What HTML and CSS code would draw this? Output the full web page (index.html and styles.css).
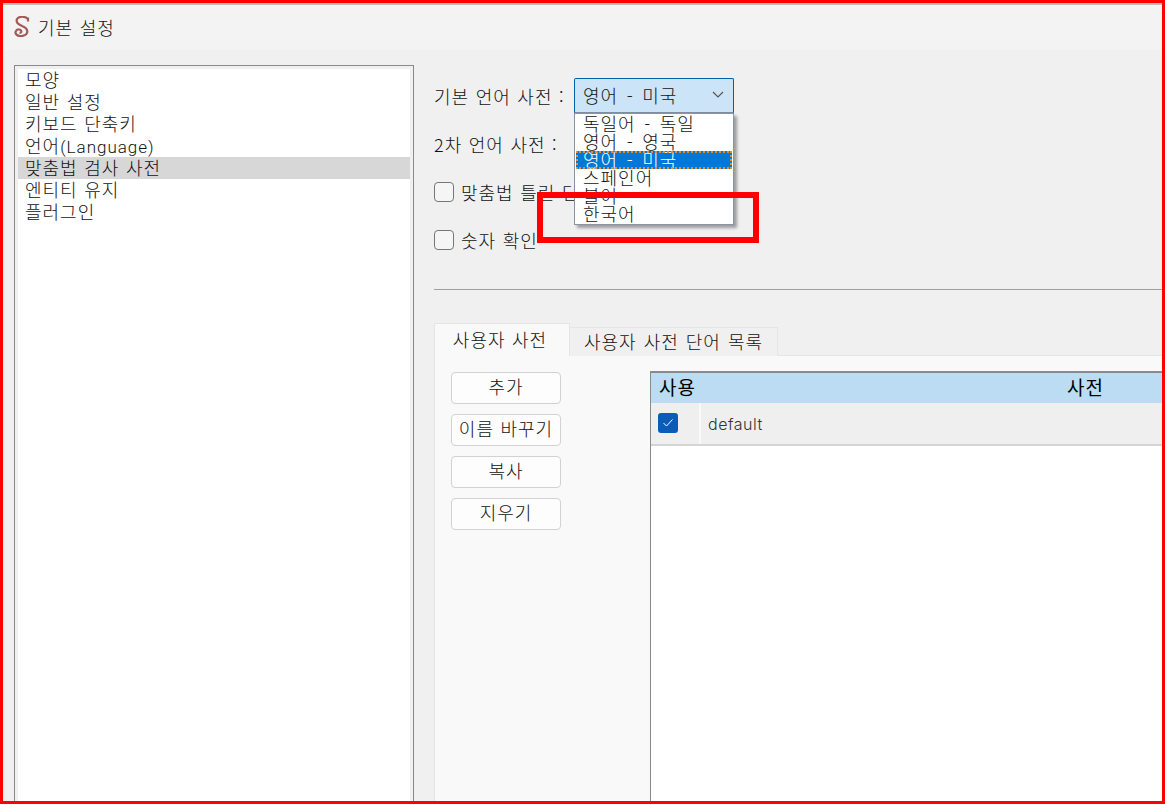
FILE: index.html
```html
<!DOCTYPE html>
<html lang="ko">
<head>
<meta charset="utf-8">
<title>기본 설정</title>
<link rel="stylesheet" href="styles.css">
</head>
<body>
<div class="frame">
  <header class="titlebar">
    <svg class="logo" width="16" height="21" viewBox="0 0 16 21"><path d="M14 1.500V5.500M14 3C11 0 5 0 3 3C1.500 7 5 8.500 8 10C12 11.500 14 14 13 17C12 20 6 21 3 19C0 17 2 13 5 13.500C8 14 8 17 5.500 17" fill="none" stroke="#a25a5a" stroke-width="2.200"/></svg>
    <span class="title">기본 설정</span>
  </header>
  <div class="main">
    <nav class="list">
      <div class="list-item">모양</div>
      <div class="list-item">일반 설정</div>
      <div class="list-item">키보드 단축키</div>
      <div class="list-item">언어<span class="latin">(Language)</span></div>
      <div class="list-item selected">맞춤법 검사 사전</div>
      <div class="list-item">엔티티 유지</div>
      <div class="list-item">플러그인</div>
    </nav>
    <section class="panel">
      <div class="row row-combo">
        <span class="label">기본 언어 사전 :</span>
        <div class="combo-wrap">
          <div class="combo"><span>영어 - 미국</span>
            <svg class="chev" width="12" height="7" viewBox="0 0 12 7"><path d="M1 1l5 5 5-5" fill="none" stroke="#555" stroke-width="1.2"/></svg>
          </div>
          <div class="popup">
            <div class="opt">독일어 - 독일</div>
            <div class="opt">영어 - 영국</div>
            <div class="opt active">영어 - 미국</div>
            <div class="opt">스페인어</div>
            <div class="opt">불어</div>
            <div class="opt">한국어</div>
          </div>
        </div>
      </div>
      <div class="row row-second"><span class="label">2차 언어 사전 :</span></div>
      <label class="row row-check"><span class="check"></span><span class="label">맞춤법 틀린 단어 표시</span></label>
      <label class="row row-check"><span class="check"></span><span class="label">숫자 확인</span></label>
      <div class="separator"></div>
      <div class="tabs">
        <div class="tab active">사용자 사전</div>
        <div class="tab">사용자 사전 단어 목록</div>
      </div>
      <div class="pane">
        <div class="buttons">
          <button class="btn">추가</button>
          <button class="btn">이름 바꾸기</button>
          <button class="btn">복사</button>
          <button class="btn">지우기</button>
        </div>
        <div class="table">
          <div class="thead"><div class="th-use">사용</div><div class="th-dict">사전</div></div>
          <div class="tr">
            <div class="td-use"><span class="tick"><svg width="12" height="10" viewBox="0 0 12 10"><path d="M1.5 5l3 3 6-6.5" fill="none" stroke="#fff" stroke-width="1"/></svg></span></div>
            <div class="td-dict">default</div>
          </div>
        </div>
      </div>
    </section>
  </div>
  <div class="annotation"></div>
</div>
</body>
</html>
```
FILE: styles.css
```css
* { box-sizing: border-box; }
html, body { margin: 0; padding: 0; }
body {
  width: 1165px;
  height: 804px;
  overflow: hidden;
  font-family: "Noto Sans CJK KR", "Noto Sans", sans-serif;
  font-size: 18px;
  font-weight: 300;
  letter-spacing: 1px;
  word-spacing: .5px;
  color: #111;
}
.frame {
  position: relative;
  width: 1165px;
  height: 804px;
  border: 3px solid #ff0000;
  background: #f0f0f0;
  overflow: hidden;
  display: flex;
  flex-direction: column;
}
.titlebar {
  flex: none;
  height: 47px;
  border-top: 2px solid #bdbdbd;
  background: #f3f3f3;
  display: flex;
  align-items: center;
  gap: 8px;
  padding: 0 0 2px 11px;
}
.logo { flex: none; }
.title { line-height: 24px; }
.main {
  flex: 1;
  min-height: 0;
  display: flex;
  gap: 20px;
  padding: 15px 0 0 11px;
}
.list {
  flex: none;
  width: 400px;
  height: 760px;
  border: 1px solid #8a8a8a;
  padding: 3px;
  background: linear-gradient(#fff, #fff) content-box, #f0f0f0;
}
.list-item {
  height: 22px;
  line-height: 20px;
  padding-left: 7px;
  white-space: nowrap;
}
.list-item.selected { background: #d7d7d7; }
.latin { font-family: Roboto, "Noto Sans", sans-serif; font-size: 17px; letter-spacing: 1px; }
.panel { flex: 1; min-width: 0; padding-top: 13px; }
.row { display: flex; align-items: center; }
.label { white-space: nowrap; line-height: 24px; }
.row-combo { height: 35px; position: relative; z-index: 2; }
.row-combo .label { width: 140px; }
.row-second { height: 24px; margin-top: 19px; }
.row-check { height: 24px; margin-top: 24px; gap: 7px; }
.check {
  flex: none;
  width: 20px;
  height: 20px;
  border: 1px solid #767676;
  border-radius: 4px;
  background: #f5f5f5;
}
.combo-wrap { position: relative; width: 160px; }
.combo {
  height: 35px;
  width: 160px;
  border: 1px solid #0060a8;
  border-bottom-color: #7f8fa0;
  border-radius: 2px 2px 0 0;
  background: #cce4f7;
  display: flex;
  align-items: center;
  justify-content: space-between;
  padding: 0 9px 2px 8px;
  word-spacing: 2.500px;
}
.popup {
  position: absolute;
  left: 0;
  top: 35px;
  width: 160px;
  height: 112px;
  border: 1px solid #8a94a6;
  background: #fff;
  padding: 1px 1px 0;
  box-shadow: 3px 3px 3px rgba(0, 0, 0, .35);
}
.opt {
  height: 18px;
  line-height: 16px;
  padding-left: 7px;
  white-space: nowrap;
  word-spacing: 2.500px;
}
.opt.active {
  background: #0078d7;
  color: #fff;
  outline: 2px dotted #f08a24;
  outline-offset: -2px;
}
.separator { height: 1px; background: #a0a0a0; margin-top: 37px; }
.tabs { display: flex; align-items: flex-end; margin-top: 33px; height: 33px; }
.tab {
  height: 29px;
  width: 208px;
  border: 1px solid #e5e5e5;
  border-left: 0;
  border-bottom: 0;
  background: #f0f0f0;
  display: flex;
  align-items: center;
  justify-content: center;
  padding-bottom: 2px;
  word-spacing: 1px;
}
.tab.active {
  height: 33px;
  width: 136px;
  border-left: 1px solid #e5e5e5;
  background: #f9f9f9;
  position: relative;
  z-index: 1;
  padding-right: 4px;
  word-spacing: .5px;
}
.pane {
  display: flex;
  height: 460px;
  margin-top: -1px;
  border: 1px solid #e5e5e5;
  border-right: 0;
  background: #f9f9f9;
  padding: 15px 0 0 16px;
}
.buttons { flex: none; width: 110px; display: flex; flex-direction: column; gap: 10px; padding-top: 1px; }
.btn {
  height: 32px;
  width: 110px;
  padding: 0 0 4px;
  border: 1px solid #d2d2d2;
  border-radius: 4px;
  background: #fdfdfd;
  font: inherit;
  color: inherit;
  letter-spacing: inherit;
  word-spacing: inherit;
  white-space: nowrap;
}
.table {
  flex: 1;
  min-width: 0;
  margin-left: 89px;
  background: #fff;
  border-top: 2px solid #8a8a8a;
  border-left: 1px solid #8a8a8a;
  overflow: hidden;
}
.thead {
  height: 30px;
  background: #bbdcf3;
  display: flex;
  align-items: center;
  padding-bottom: 3px;
  color: #000;
  font-size: 19px;
  font-weight: 400;
}
.th-use { width: 416px; padding-left: 8px; }
.tr {
  height: 43px;
  background: #efefef;
  border-bottom: 2px solid #d5d5d5;
  display: flex;
}
.td-use {
  width: 50px;
  border-right: 2px solid #f9f9f9;
  padding: 10px 0 0 7px;
}
.tick {
  width: 20px;
  height: 20px;
  border-radius: 3px;
  background: #0b5cb8;
  display: flex;
  align-items: center;
  justify-content: center;
}
.td-dict {
  padding-left: 7px;
  line-height: 42px;
  font-family: Inter, "Noto Sans", sans-serif;
  font-size: 16px;
  color: #333;
  letter-spacing: .5px;
}
.annotation {
  position: absolute;
  left: 534px;
  top: 189px;
  width: 222px;
  height: 51px;
  border: 6px solid #ff0000;
  z-index: 5;
}
```
